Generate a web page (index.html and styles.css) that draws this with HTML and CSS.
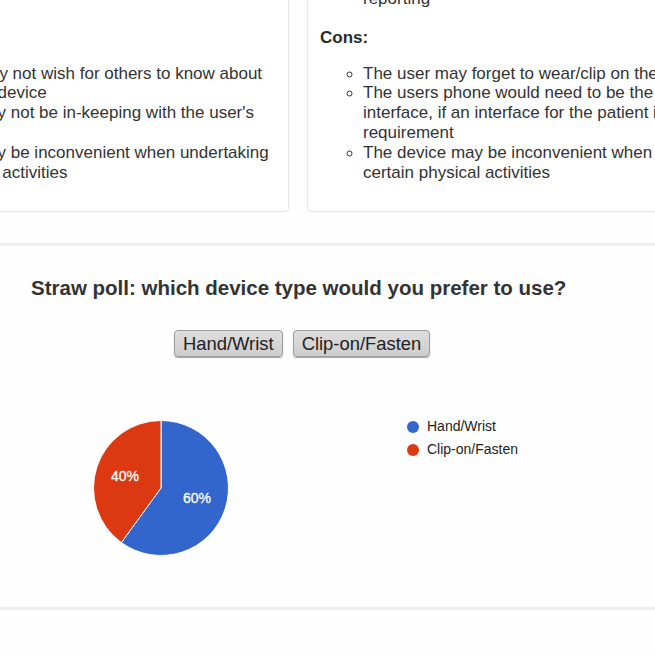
FILE: index.html
```html
<!DOCTYPE html>
<html>
<head>
<meta charset="utf-8">
<link rel="stylesheet" href="styles.css">
</head>
<body>
<div class="viewport">
  <div class="cards">
    <div class="card">
      <ul class="list">
        <li>Can be worn discreetly throughout the day<br>style</li>
      </ul>
      <h4 class="card-heading">Cons:</h4>
      <ul class="list">
        <li>The patient may not wish for others to know about<br>them having a device</li>
        <li>The device may not be in-keeping with the user's<br>style</li>
        <li>The device may be inconvenient when undertaking<br>heavy physical activities</li>
      </ul>
    </div>
    <div class="card">
      <ul class="list">
        <li>Allows for passive monitoring and automatic<br>reporting</li>
      </ul>
      <h4 class="card-heading">Cons:</h4>
      <ul class="list">
        <li>The user may forget to wear/clip on the device</li>
        <li>The users phone would need to be the main<br>interface, if an interface for the patient is a<br>requirement</li>
        <li>The device may be inconvenient when undertaking<br>certain physical activities</li>
      </ul>
    </div>
  </div>

  <div class="divider"></div>

  <section class="poll">
    <h3 class="poll-title">Straw poll: which device type would you prefer to use?</h3>
    <div class="poll-buttons">
      <button class="poll-btn">Hand/Wrist</button>
      <button class="poll-btn">Clip-on/Fasten</button>
    </div>
    <div class="chart">
      <svg class="pie" width="136" height="136" viewBox="0 0 136 136">
        <path d="M68 68 L68 0.5 A67.5 67.5 0 1 1 28.33 122.61 Z" fill="#3366cc" stroke="#ffffff" stroke-width="1"/>
        <path d="M68 68 L28.33 122.61 A67.5 67.5 0 0 1 68 0.5 Z" fill="#dc3912" stroke="#ffffff" stroke-width="1"/>
        <text x="32" y="61" class="pie-label" text-anchor="middle">40%</text>
        <text x="104" y="83" class="pie-label" text-anchor="middle">60%</text>
      </svg>
      <ul class="legend">
        <li class="legend-item"><span class="dot dot-blue"></span>Hand/Wrist</li>
        <li class="legend-item"><span class="dot dot-red"></span>Clip-on/Fasten</li>
      </ul>
    </div>
  </section>

  <div class="divider divider-bottom"></div>
</div>
</body>
</html>
```

FILE: styles.css
```css
html, body {
  margin: 0;
  padding: 0;
  background: #fefefe;
}

body {
  font-family: "Liberation Sans", Arial, sans-serif;
  color: #333333;
  overflow: hidden;
  width: 655px;
  height: 655px;
}

.viewport {
  width: 655px;
  overflow: hidden;
}

.cards {
  display: grid;
  grid-template-columns: 459px 459px;
  column-gap: 18px;
  margin-left: -170px;
  margin-top: -32px;
}

.card {
  border: 1px solid #e6e6e6;
  border-radius: 4px;
  background: #ffffff;
  padding: 0 12px 29px;
  font-size: 17px;
  line-height: 19.8px;
}

.list {
  margin: 0;
  padding-left: 43px;
  list-style: circle;
  white-space: nowrap;
}

.list li::marker {
  font-size: 15px;
}

.card-heading {
  margin: 19px 0 16px;
  font-size: 17px;
  line-height: 20px;
  font-weight: bold;
  color: #2a2a2a;
}

.divider {
  height: 3px;
  background: #efefef;
  margin-top: 31px;
}

.poll {
  padding: 31px 0 0 31px;
}

.poll-title {
  margin: 0;
  font-size: 20.5px;
  line-height: 22px;
  font-weight: bold;
  color: #333333;
}

.poll-buttons {
  display: flex;
  gap: 10px;
  margin: 31px 0 0 143px;
}

.poll-btn {
  font-family: "Liberation Sans", Arial, sans-serif;
  font-size: 18.4px;
  color: #222222;
  height: 27px;
  padding: 0 8px;
  background: linear-gradient(#dedede, #cdcdcd);
  border: 1px solid #9c9c9c;
  border-radius: 4px;
  box-shadow: 0 1px 1px rgba(0, 0, 0, 0.35);
}

.chart {
  display: flex;
  align-items: flex-start;
  margin-top: 63px;
  padding-left: 62px;
}

.pie {
  display: block;
}

.pie-label {
  font-family: "Liberation Sans", Arial, sans-serif;
  font-size: 14px;
  fill: #ffffff;
  stroke: #ffffff;
  stroke-width: 0.3px;
}

.legend {
  list-style: none;
  margin: -5px 0 0 178px;
  padding: 0;
}

.legend-item {
  display: flex;
  align-items: center;
  font-size: 14px;
  line-height: 23px;
  color: #222222;
}

.dot {
  width: 12px;
  height: 12px;
  border-radius: 50%;
  margin-right: 8px;
}

.dot-blue {
  background: #3366cc;
}

.dot-red {
  background: #dc3912;
}

.divider-bottom {
  margin-top: 51px;
}
```
